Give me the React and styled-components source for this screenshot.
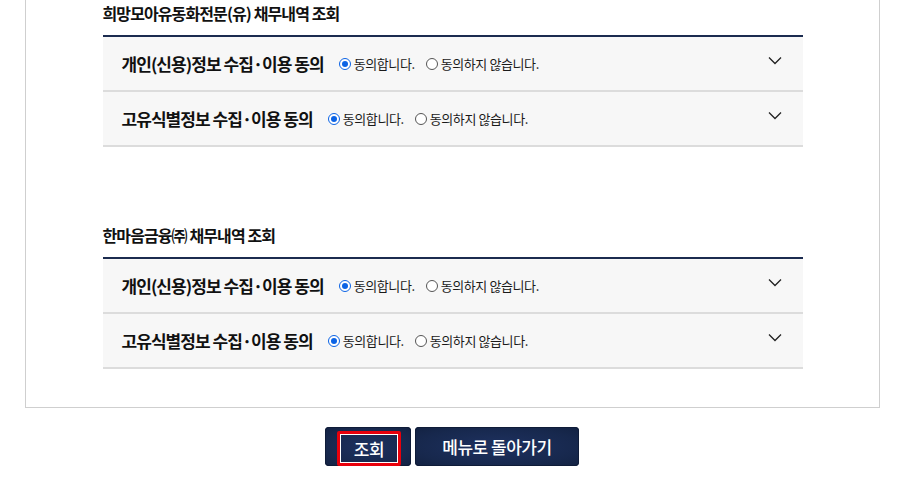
import React from 'react';
import styled, { createGlobalStyle } from 'styled-components';

const GlobalStyle = createGlobalStyle`
    body {
        margin: 0;
        background: #fff;
        font-family: "Noto Sans CJK KR", "Noto Sans", sans-serif;
        color: #111;
    }
`;

const Page = styled.div`
    width: 900px;
    height: 504px;
    overflow: hidden;
`;

const Panel = styled.div`
    margin: -40px 20px 0 25px;
    padding: 41px 0 38px;
    border: 1px solid #cfcfcf;
    display: flex;
    flex-direction: column;
    align-items: center;
`;

const Section = styled.section`
    width: 700px;
    & + & {
        margin-top: 77px;
    }
`;

const SectionTitle = styled.h3`
    margin: 0 0 11px;
    font-size: 16px;
    line-height: 22px;
    font-weight: 700;
    letter-spacing: -0.9px;
    color: #111;
`;

const List = styled.ul`
    margin: 0;
    padding: 0;
    list-style: none;
    border-top: 2px solid #1b2b4f;
`;

const Row = styled.li`
    height: 53px;
    display: flex;
    align-items: center;
    padding: 0 21px 0 19px;
    background: #f7f7f7;
    border-bottom: 2px solid #dcdcdc;
`;

const Label = styled.strong`
    font-size: 17px;
    font-weight: 700;
    letter-spacing: -0.95px;
    color: #111;
    margin-right: 15px;
`;

const Options = styled.div`
    display: flex;
    align-items: center;
    gap: 11px;
    flex: 1;
`;

const Option = styled.label`
    display: flex;
    align-items: center;
    gap: 3px;
    font-size: 13px;
    letter-spacing: -0.4px;
    color: #1a1a1a;
`;

const RadioDot = styled.span`
    width: 12px;
    height: 12px;
    box-sizing: border-box;
    border-radius: 50%;
    border: 1px solid ${(props) => (props.checked ? '#0b63e5' : '#555')};
    background: #fff;
    display: flex;
    align-items: center;
    justify-content: center;
    &::after {
        content: '';
        width: 6px;
        height: 6px;
        border-radius: 50%;
        background: ${(props) => (props.checked ? '#0b63e5' : 'transparent')};
    }
`;

const Chevron = () => (
    <svg width="14" height="9" viewBox="0 0 14 9" style={{ marginTop: -6 }}>
        <polyline points="1,1.5 7,7.5 13,1.5" fill="none" stroke="#222" strokeWidth="1.3" />
    </svg>
);

const Buttons = styled.div`
    display: flex;
    justify-content: center;
    gap: 4px;
    margin: 19px 0 0 4px;
`;

const Button = styled.button`
    width: ${(props) => props.width}px;
    height: 39px;
    padding: ${(props) => (props.focused ? '4px 10px 0 12px' : '0')};
    border: none;
    border-radius: 4px;
    background: radial-gradient(ellipse at center, #1e3160 0%, #17284d 70%, #132242 100%);
    box-shadow: inset 0 0 0 1px #0f1c38;
    color: #fff;
    font-family: "Noto Sans CJK KR", "Noto Sans", sans-serif;
    font-size: 17px;
    font-weight: 500;
    letter-spacing: -0.5px;
    display: flex;
    align-items: ${(props) => (props.focused ? 'stretch' : 'center')};
    justify-content: center;
`;

const FocusRing = styled.span`
    flex: 1;
    display: flex;
    align-items: center;
    justify-content: center;
    border: 3px solid #e8000b;
    border-radius: 2px;
    box-shadow: inset 0 0 0 1px #fff;
`;

const sections = [
    { title: '희망모아유동화전문(유) 채무내역 조회' },
    { title: '한마음금융㈜ 채무내역 조회' },
];

const items = ['개인(신용)정보 수집·이용 동의', '고유식별정보 수집·이용 동의'];

const App = () => {
    return (
        <Page>
            <GlobalStyle />
            <Panel>
                {sections.map((section) => (
                    <Section key={section.title}>
                        <SectionTitle>{section.title}</SectionTitle>
                        <List>
                            {items.map((item) => (
                                <Row key={item}>
                                    <Label>{item}</Label>
                                    <Options>
                                        <Option>
                                            <RadioDot checked />
                                            동의합니다.
                                        </Option>
                                        <Option>
                                            <RadioDot />
                                            동의하지 않습니다.
                                        </Option>
                                    </Options>
                                    <Chevron />
                                </Row>
                            ))}
                        </List>
                    </Section>
                ))}
            </Panel>
            <Buttons>
                <Button width={86} focused>
                    <FocusRing>조회</FocusRing>
                </Button>
                <Button width={164}>메뉴로 돌아가기</Button>
            </Buttons>
        </Page>
    );
};

export default App;
